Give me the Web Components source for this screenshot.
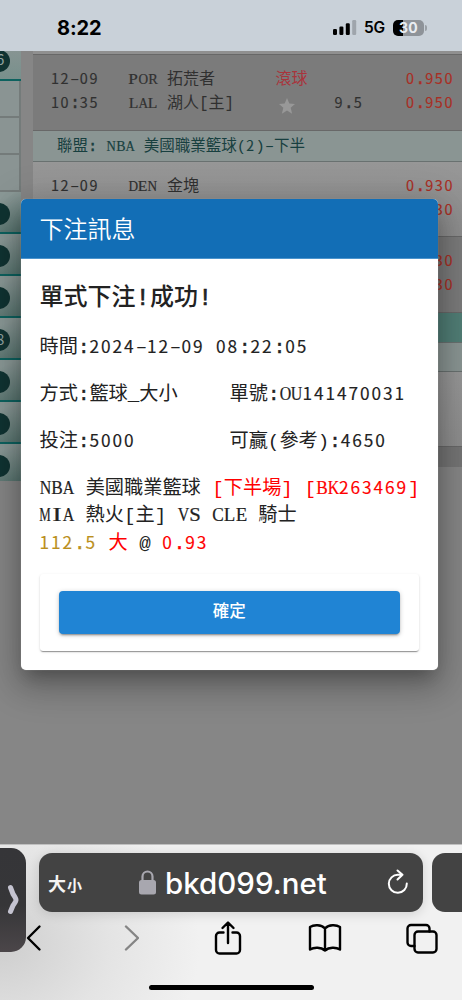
<!DOCTYPE html>
<html lang="zh-Hant">
<head>
<meta charset="utf-8">
<meta name="viewport" content="width=device-width">
<title>下注訊息</title>
<style>
html,body{margin:0;padding:0}
body{width:462px;height:1000px;overflow:hidden;background:#868686;font-family:"Liberation Mono","Noto Sans CJK TC",monospace}
</style>
</head>
<body>
<betting-app></betting-app>
<script>
const define=(name,html,extra)=>{
  const t=document.createElement('template');t.innerHTML=html;
  customElements.define(name,class extends HTMLElement{
    connectedCallback(){
      if(this.shadowRoot)return;
      const r=this.attachShadow({mode:'open'});
      r.append(t.content.cloneNode(true));
      if(extra)extra(this,r);
    }
  });
};

/* Fixed-pitch text: sans digits, slab-like capitals, all on a 0.6em grid */
const CAPS={A:.722,B:.667,C:.667,D:.722,E:.611,I:.333,K:.722,L:.611,M:.889,N:.722,O:.722,P:.556,R:.667,S:.556,U:.722,V:.722};
const CAP_SIZE=.93;
define('mono-text',`<style>
:host{display:inline;white-space:pre}
.d{font-family:"Noto Sans CJK TC",sans-serif;font-size:.9em;letter-spacing:.1117em;line-height:1px;-webkit-text-stroke:.15px currentColor}
.c{display:inline-block;font-family:"Liberation Serif",serif;font-size:${CAP_SIZE}em;line-height:1px;-webkit-text-stroke:.2px currentColor}
.p{-webkit-text-stroke:.5px currentColor}
.h{display:inline-block;font-family:"Noto Sans CJK TC",sans-serif;margin:0 .1265em;line-height:1px;transform:scaleX(1.7)}
</style>`,(el,r)=>{
  for(const run of el.textContent.match(/[0-9]+|[A-Z]|[:.\-]|[^0-9A-Z:.\-]+/g)||[]){
    const s=document.createElement('span');s.textContent=run;
    if(/[0-9]/.test(run))s.className='d';
    else if(CAPS[run]){
      const w=CAPS[run],box=.6/CAP_SIZE;
      s.className='c';
      s.style.margin=`0 ${(box-w)/2}em`;
      s.style.transform=`scaleX(${Math.min(1.6,box/w)})`;
    }
    else if(run==='-')s.className='h';
    else if(/[:.]/.test(run))s.className='p';
    r.append(s);
  }
});

define('status-bar',`<style>
:host{display:flex;box-sizing:border-box;height:51px;padding:4px 35px 0 57px;align-items:center;background:#c9d1d9;color:#000;font-family:Inter,sans-serif}
.time{font-weight:700;font-size:20px;letter-spacing:-.1px;flex:1}
.net{font-weight:600;font-size:15.500px;margin:0 8px 0 7.500px;letter-spacing:-.2px}
.bat{display:flex;align-items:center;justify-content:center;width:31px;height:16px;border-radius:5px;background:linear-gradient(90deg,#000 10px,#8e9399 10px);color:#e9edf2;font-weight:700;font-size:14px;letter-spacing:.2px}
.tip{width:2px;height:6px;border-radius:0 2px 2px 0;background:#9aa0a6;margin-left:1px}
svg{display:block}
</style>
<span class="time">8:22</span>
<svg width="24" height="15"><rect x="0" y="9" width="4" height="6" rx="1.2"/><rect x="6.4" y="6.5" width="4" height="8.500" rx="1.200"/><rect x="12.800" y="3.300" width="4" height="11.700" rx="1.200"/><rect x="19.200" y="0" width="4" height="15" rx="1.200" fill="#9fa5ac"/></svg>
<span class="net">5G</span><span class="bat">30</span><span class="tip"></span>`);

define('side-item',`<style>
:host{display:flex;align-items:center;box-sizing:border-box;width:20.500px;height:42px;padding-top:3px;overflow:hidden;border-bottom:2px solid #0d625f;background:linear-gradient(155deg,#8a9896 15%,#56736e 100%)}
:host([first]){height:30px;padding:0;align-items:flex-start;background:linear-gradient(#869492,#78908c)}
:host([last]){height:37px;padding-top:7px;border-bottom:0}
b{flex:none;box-sizing:border-box;width:22px;height:22px;margin-left:-12px;border-radius:50%;background:#103332;color:#93a5a3;font:15px/20px "Noto Sans CJK TC",sans-serif;padding-left:8px}
:host([first]) b{margin-top:-1px;line-height:18px}
</style><b><slot></slot></b>`);
define('side-cell',`<style>:host{display:block;box-sizing:border-box;width:20.500px;height:37px;background:#8a9493;border:solid #747b7a;border-width:0 2px 2px 0}</style>`);
define('side-menu',`<style>:host{display:flex;flex-direction:column;width:33px}</style>
<side-item first>6</side-item><side-cell></side-cell><side-cell></side-cell><side-cell></side-cell>
<side-item></side-item><side-item></side-item><side-item></side-item><side-item>8</side-item><side-item></side-item><side-item></side-item><side-item last></side-item>`);

define('league-row',`<style>
:host{display:block;box-sizing:border-box;height:31px;padding-left:24px;background:#8a9593;color:#173f3f;border-bottom:1px solid #697170;font-size:15.500px;line-height:32px;white-space:pre}
:host([teal]){background:#517e76;height:30px}
</style><slot></slot>`);

define('game-row',`<style>
:host{display:grid;box-sizing:border-box;height:75px;padding:12.500px 8px 0 18px;grid-template-columns:77.500px 147px 59px 1fr auto;grid-auto-rows:24px;line-height:24px;font-size:16px;color:#303030;border-bottom:1px solid #686868;background:linear-gradient(#979797,#8d8d8d)}
:host([dark]){background:#7b7b7b}
:host(.first){padding-top:13px}
.odd{color:#a92e24}.live{color:#a9343b}
svg{display:block;margin:5.500px 0 0 3px}
</style>`,(el,r)=>{
  const g=(k,c='')=>`<span class="${c}">${el.getAttribute(k)?`<mono-text>${el.getAttribute(k)}</mono-text>`:''}</span>`;
  const star=el.hasAttribute('live')?'<svg width="16" height="16" viewBox="0 0 24 24" fill="#989898"><path d="M12 0l3.500 8.300 8.500.7-6.500 5.600 2.200 8.900L12 18.700l-7.700 4.800 2.200-8.900L0 9l8.500-.7z"/></svg>':'<span></span>';
  const t=document.createElement('template');
  t.innerHTML=g('date')+g('home')+g('live','live')+'<span></span>'+g('odd1','odd')+g('time')+g('away')+star+g('line')+g('odd2','odd');
  r.append(t.content);
});

define('game-table',`<style>
:host{display:flex;flex-direction:column;flex:1}
.end{height:4px;background:#909090;border-bottom:1px solid #686868;box-sizing:border-box}
.foot{height:20px;background:#757575}
.first{height:76px}
.plain{height:29px}
</style>
<div class="end"></div>
<game-row class="first" dark date="12-09" home="POR 拓荒者" live="滾球" odd1="0.950" time="10:35" away="LAL 湖人[主]" line="9.5" odd2="0.950"></game-row>
<league-row><mono-text>聯盟: NBA 美國職業籃球(2)-下半</mono-text></league-row>
<game-row date="12-09" home="DEN 金塊" odd1="0.930" odd2="0.930"></game-row>
<game-row dark style="height:76px" odd1="0.930" odd2="0.930"></game-row>
<league-row teal></league-row><league-row class="plain"></league-row>
<game-row></game-row><div class="foot"></div>`);

define('ok-button',`<style>
:host{display:block;box-sizing:border-box;margin:0 19px 19px;padding:17px 19px;border-radius:3px;background:#fff;box-shadow:0 2px 1px -1px #0004,0 1px 1px #0002,0 1px 3px #0002}
button{display:block;width:100%;height:43.500px;padding:0 0 4px;border:0;border-radius:4px;background:#2084d4;color:#fff;font:500 16.500px "Noto Sans CJK TC",sans-serif;box-shadow:0 3px 1px -2px #0003,0 2px 2px #0002,0 1px 5px #0003}
</style><button><slot></slot></button>`);

define('bet-dialog',`<style>
:host{display:flex;flex-direction:column;box-sizing:border-box;width:417.500px;height:471px;border-radius:5px;overflow:hidden;background:#fff;color:#222;box-shadow:0 0 1px #bbb,0 11px 15px -7px #0003,0 14px 28px 3px #0003,0 9px 40px 8px #0002}
header{height:60px;box-sizing:border-box;padding-left:19px;background:#126eb6;color:#fff;font:350 24px/57px "Noto Sans CJK TC",sans-serif;border-bottom:1px solid #4b94cd}
main{flex:1;padding:24.500px 0 0 19px;font-size:19.200px}
h1{margin:0;font-size:24px;line-height:30px;font-weight:500;font-family:"Liberation Mono","Noto Sans CJK TC",monospace}
h1 span{-webkit-text-stroke:.7px currentColor}
p{margin:0;display:grid;grid-template-columns:190px 1fr;line-height:27px;padding-top:20px}
h1+p{padding-top:21px}
.note{display:block;line-height:27.500px}
.red{color:#f00}.gold{color:#bb901d}
</style>
<header>下注訊息</header>
<main><h1>單式下注<span>!</span>成功<span>!</span></h1>
<p style="display:block"><mono-text>時間:2024-12-09 08:22:05</mono-text></p>
<p><mono-text>方式:籃球_大小</mono-text><mono-text>單號:OU141470031</mono-text></p>
<p><mono-text>投注:5000</mono-text><mono-text>可贏(參考):4650</mono-text></p>
<p class="note"><mono-text>NBA 美國職業籃球 </mono-text><mono-text class="red">[下半場] [BK263469]</mono-text><br><mono-text>MIA 熱火[主] VS CLE 騎士</mono-text><br><mono-text class="gold">112.5 </mono-text><mono-text class="red">大 </mono-text><mono-text>@ </mono-text><mono-text class="red">0.93</mono-text></p></main>
<ok-button>確定</ok-button>`);

define('address-bar',`<style>
:host{display:flex;flex:none;align-items:center;box-sizing:border-box;width:384px;height:59px;padding:0 13px 0 9px;border-radius:13px;background:#434343;color:#fff;box-shadow:0 2px 12px #0002}
.size{font:700 18px "Noto Sans CJK TC",sans-serif;width:91px;display:flex;align-items:baseline;color:#f4f4f4}
small{font-size:15px;margin-left:1px}
.url{font:500 29.500px Inter,sans-serif;margin-left:9px;flex:1;white-space:nowrap}
svg{display:block;flex:none}
</style>
<span class="size">大<small>小</small></span>
<svg width="17" height="25" viewBox="0 0 17 25"><path d="M3.500 11V6.500a5 5 0 0 1 10 0V11" fill="none" stroke="#a8a7af" stroke-width="2.200"/><rect x="0" y="10" width="17" height="14.500" rx="2.500" fill="#a8a7af"/></svg>
<span class="url"><slot></slot></span>
<svg width="24" height="28" viewBox="0 0 24 28" fill="none" stroke="#fff" stroke-width="2" stroke-linecap="round" stroke-linejoin="round"><path d="M20.800 14.500A9 9 0 1 1 12 5.800h4.500M11.500 1.500l5 4.300-5 4.700"/></svg>`);

define('safari-bar',`<style>
:host{display:block;position:relative;height:156px;overflow:hidden;background:radial-gradient(ellipse 200px 160px at 0 65%,#cecece,#e4e4e4 55%,#f1f1f1 100%);border-top:1px solid #c0c0c0;box-sizing:border-box}
.tabs{display:flex;gap:9px;padding:8px 0 0 39px}
.next{flex:none;width:60px;height:59px;border-radius:13px;background:#434343}
.side{position:absolute;left:-4px;top:3px;width:30px;height:104px;border-radius:0 15px 15px 0;background:linear-gradient(#353538,#363638 55%,#4b4649);display:flex;align-items:center}
.side svg{margin-left:11px}
svg{display:block}
.home{width:165px;height:5px;border-radius:3px;background:#000;margin:27px 0 0 149px}
nav{display:grid;grid-template-columns:repeat(5,97px);height:40px;padding-top:6px;margin-left:-15px;align-items:center;justify-items:center;fill:none;stroke:#000;stroke-width:2.400;stroke-linecap:round;stroke-linejoin:round}
</style>
<div class="tabs"><address-bar>bkd099.net</address-bar><div class="next"></div></div>
<nav>
<svg width="16" height="28"><path d="M13.500 2.500L2 14l11.500 11.500"/></svg>
<svg width="16" height="28" stroke="#858585"><path d="M3 2.500L15 14 3 25.500"/></svg>
<svg width="28" height="36"><path d="M9.500 12.500H5.500a3.500 3.500 0 0 0-3.500 3.500v14a3.500 3.500 0 0 0 3.500 3.500h17a3.500 3.500 0 0 0 3.500-3.500V16a3.500 3.500 0 0 0-3.500-3.500h-4M14 23V2.800M8.500 8L14 2.500 19.500 8"/></svg>
<svg width="34" height="30"><path d="M17 5.500C13 1.500 6 1.500 2 4v22.500c4-2.500 11-2.500 15 1 4-3.500 11-3.500 15-1V4C28 1.500 21 1.500 17 5.500zM17 5.500v22"/></svg>
<svg width="32" height="31"><rect x="8.500" y="8.500" width="22" height="21" rx="3.500"/><path d="M8.500 23H5a3.500 3.500 0 0 1-3.500-3.500v-14A3.500 3.500 0 0 1 5 2h15a3.500 3.500 0 0 1 3.500 3.500v3"/></svg>
</nav>
<div class="home"></div>
<div class="side"><svg width="14" height="32" fill="none" stroke="#c4c3d0" stroke-width="5" stroke-linecap="round" stroke-linejoin="round"><path d="M3.500 3.500l2.500 6.500q3 4.500 3 6t-3 5.500l-2.500 6"/></svg></div>`);

define('betting-app',`<style>
:host{display:flex;flex-direction:column;position:relative;width:462px;height:1000px;overflow:hidden}
.page{display:flex;align-items:flex-start;height:793px;background:#868686;overflow:hidden}
bet-dialog{position:absolute;left:20.500px;top:199px}
</style>
<status-bar></status-bar>
<div class="page"><side-menu></side-menu><game-table></game-table></div>
<safari-bar></safari-bar>
<bet-dialog></bet-dialog>`);
</script>
</body>
</html>
